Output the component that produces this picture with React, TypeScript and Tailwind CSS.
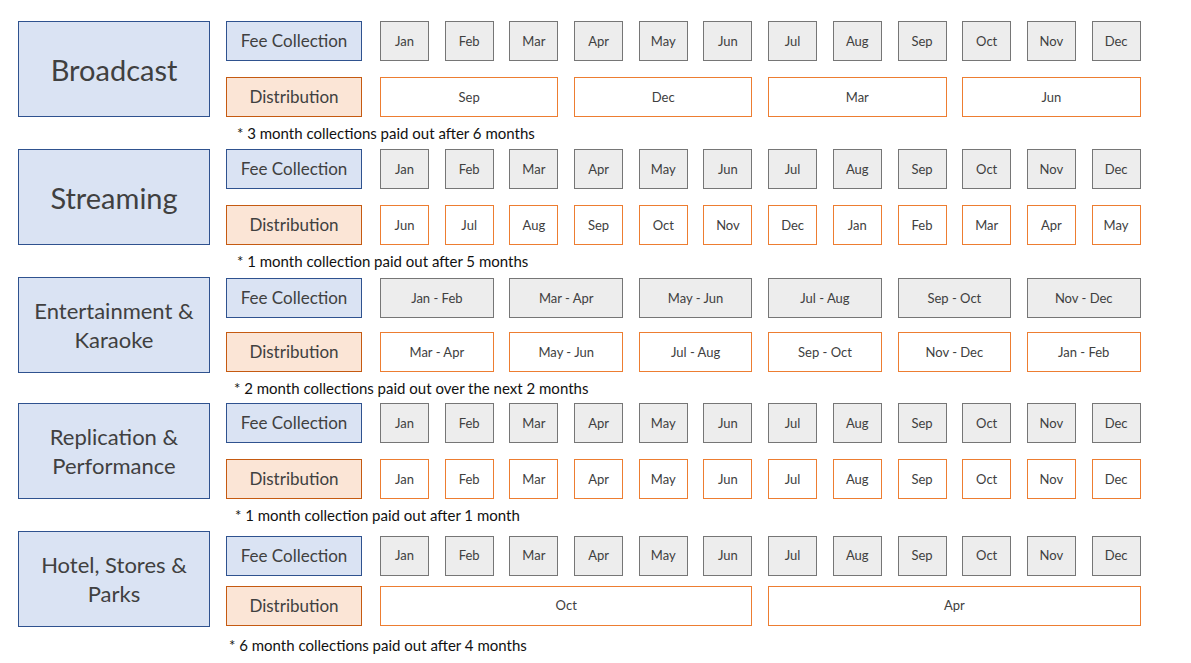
import React from 'react'

const MONTHS = ['Jan', 'Feb', 'Mar', 'Apr', 'May', 'Jun', 'Jul', 'Aug', 'Sep', 'Oct', 'Nov', 'Dec']

type Cell = { label: string; span: 1 | 2 | 3 | 6 }

type Section = {
  title: string[]
  fee: Cell[]
  dist: Cell[]
  note: string
  noteIndent: string
  rowGap: string
  after: string
}

const singles = (list: string[]): Cell[] => list.map((label) => ({ label, span: 1 }))

const sections: Section[] = [
  {
    title: ['Broadcast'],
    fee: singles(MONTHS),
    dist: [
      { label: 'Sep', span: 3 },
      { label: 'Dec', span: 3 },
      { label: 'Mar', span: 3 },
      { label: 'Jun', span: 3 },
    ],
    note: '* 3 month collections paid out after 6 months',
    noteIndent: 'pl-[219px]',
    rowGap: 'gap-4',
    after: 'h-8',
  },
  {
    title: ['Streaming'],
    fee: singles(MONTHS),
    dist: singles(['Jun', 'Jul', 'Aug', 'Sep', 'Oct', 'Nov', 'Dec', 'Jan', 'Feb', 'Mar', 'Apr', 'May']),
    note: '* 1 month collection paid out after 5 months',
    noteIndent: 'pl-[219px]',
    rowGap: 'gap-4',
    after: 'h-8',
  },
  {
    title: ['Entertainment &', 'Karaoke'],
    fee: ['Jan - Feb', 'Mar - Apr', 'May - Jun', 'Jul - Aug', 'Sep - Oct', 'Nov - Dec'].map((label) => ({ label, span: 2 })),
    dist: ['Mar - Apr', 'May - Jun', 'Jul - Aug', 'Sep - Oct', 'Nov - Dec', 'Jan - Feb'].map((label) => ({ label, span: 2 })),
    note: '* 2 month collections paid out over the next 2 months',
    noteIndent: 'pl-[216px]',
    rowGap: 'gap-[14px]',
    after: 'h-[30px]',
  },
  {
    title: ['Replication &', 'Performance'],
    fee: singles(MONTHS),
    dist: singles(MONTHS),
    note: '* 1 month collection paid out after 1 month',
    noteIndent: 'pl-[217px]',
    rowGap: 'gap-4',
    after: 'h-8',
  },
  {
    title: ['Hotel, Stores &', 'Parks'],
    fee: singles(MONTHS),
    dist: [
      { label: 'Oct', span: 6 },
      { label: 'Apr', span: 6 },
    ],
    note: '* 6 month collections paid out after 4 months',
    noteIndent: 'pl-[211px]',
    rowGap: 'gap-[10px] pt-[3px]',
    after: 'h-9',
  },
]

const spanClass = { 1: 'col-span-1', 2: 'col-span-2', 3: 'col-span-3', 6: 'col-span-6' }

function MonthRow({ cells, kind }: { cells: Cell[]; kind: 'fee' | 'dist' }) {
  const tone =
    kind === 'fee' ? 'bg-[#ededed] border-[#767676]' : 'bg-white border-[#ed7d31]'
  return (
    <div className="ml-[18px] grid grid-cols-[repeat(12,49px)] gap-x-[15.7px]">
      {cells.map((c, i) => (
        <div
          key={i}
          className={`${spanClass[c.span]} ${tone} flex h-10 items-center justify-center border-[1.5px] pt-px text-[13px] text-[#404040]`}
        >
          {c.label}
        </div>
      ))}
    </div>
  )
}

function Block({ s }: { s: Section }) {
  // one-word titles sit larger than the two-line ones
  const titleSize = s.title.length > 1 ? 'text-[22px]' : 'text-[29px]'
  return (
    <div className="flex flex-col">
      <div className="flex">
        <div
          className={`flex h-24 w-[192px] flex-none flex-col items-center justify-center border-[1.5px] border-[#2f528f] bg-[#dae3f3] leading-[29px] text-[#404040] ${titleSize}`}
        >
          {s.title.map((t) => (
            <span key={t}>{t}</span>
          ))}
        </div>
        <div className={`ml-4 flex flex-col justify-center ${s.rowGap}`}>
          <div className="flex items-center">
            <div className="flex h-10 w-[136px] items-center justify-center border-[1.5px] border-[#2f528f] bg-[#dae3f3] text-[17px] text-[#404040]">
              Fee Collection
            </div>
            <MonthRow cells={s.fee} kind="fee" />
          </div>
          <div className="flex items-center">
            <div className="flex h-10 w-[136px] items-center justify-center border-[1.5px] border-[#c55a11] bg-[#fbe5d6] text-[17px] text-[#404040]">
              Distribution
            </div>
            <MonthRow cells={s.dist} kind="dist" />
          </div>
        </div>
      </div>
      <p className={`${s.after} flex items-center ${s.noteIndent} text-[15px] text-[#111]`}>{s.note}</p>
    </div>
  )
}

export default function App() {
  return (
    <div className="h-[663px] w-[1191px] bg-white pl-[18px] pt-[21px] font-['Lato',sans-serif]">
      {sections.map((s) => (
        <Block key={s.title[0]} s={s} />
      ))}
    </div>
  )
}
